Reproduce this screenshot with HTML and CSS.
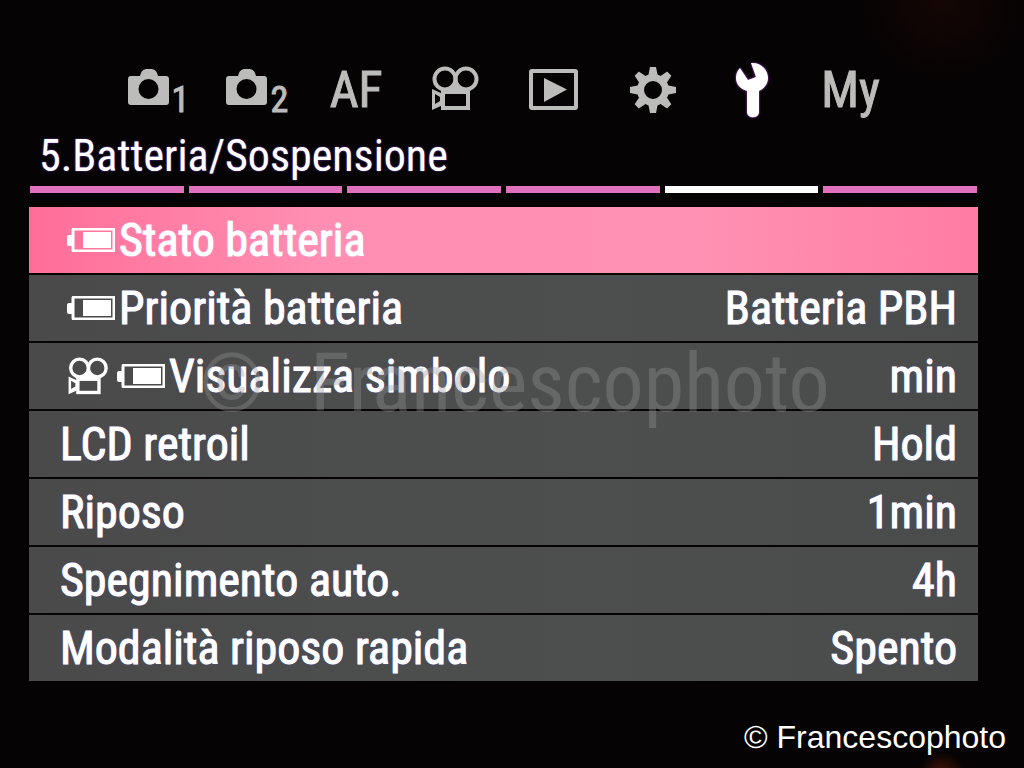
FILE: index.html
```html
<!DOCTYPE html>
<html lang="it">
<head>
<meta charset="utf-8">
<meta name="viewport" content="width=device-width, initial-scale=1">
<title>5.Batteria/Sospensione</title>
<link rel="stylesheet" href="styles.css">
</head>
<body>
<svg class="defs" aria-hidden="true">
  <symbol id="camera" viewBox="0 0 42 36">
    <path fill="currentColor" fill-rule="evenodd" d="M3 7H12Q13 1 18 0H24Q29 1 30 7H38Q41 7 41 10V33Q41 36 38 36H3Q0 36 0 33V10Q0 7 3 7ZM20.500 10A10 10 0 1 0 20.500 30A10 10 0 1 0 20.500 10Z"/>
  </symbol>
  <symbol id="movie" viewBox="0 0 48 45">
    <g fill="none" stroke="currentColor" stroke-width="4">
      <circle cx="14" cy="13" r="10.500"/>
      <circle cx="35" cy="13" r="10.500"/>
      <rect x="12" y="26" width="25" height="16"/>
    </g>
    <path fill="currentColor" d="M17 22L24.500 16L32 22L38 28H12Z"/>
    <path fill="currentColor" fill-rule="evenodd" d="M1 23L12 28V39L1 44ZM4 28V38L9 35V31Z"/>
  </symbol>
  <symbol id="battery" viewBox="0 0 48 24">
    <rect x="6" y="1" width="41" height="22" rx="1" fill="none" stroke="currentColor" stroke-width="3"/>
    <path fill="currentColor" d="M0 9Q0 7 2 7H6V18H2Q0 18 0 16ZM16 4H44V20H16Z"/>
  </symbol>
</svg>

<main class="screen">
  <nav class="tabs" aria-label="Menu">
    <button class="tab" type="button" aria-label="Foto 1"><svg class="icon-camera"><use href="#camera"/></svg><span class="tab-number">1</span></button>
    <button class="tab" type="button" aria-label="Foto 2"><svg class="icon-camera"><use href="#camera"/></svg><span class="tab-number">2</span></button>
    <button class="tab" type="button">AF</button>
    <button class="tab" type="button" aria-label="Video"><svg class="icon-movie"><use href="#movie"/></svg></button>
    <button class="tab" type="button" aria-label="Riproduzione">
      <svg class="icon-play" viewBox="0 0 50 42"><rect x="2" y="2" width="45" height="37" rx="1" fill="none" stroke="currentColor" stroke-width="4"/><path fill="currentColor" d="M15 9L38 20.500L15 33Z"/></svg>
    </button>
    <button class="tab" type="button" aria-label="Ingranaggio">
      <svg class="icon-gear" viewBox="-24 -24 48 48">
        <circle r="12.500" fill="none" stroke="currentColor" stroke-width="7"/>
        <g fill="currentColor">
          <path id="teeth" d="M-5 -13L-3 -23H3L5 -13ZM-5 13L-3 23H3L5 13ZM-13 -5L-23 -3V3L-13 5ZM13 -5L23 -3V3L13 5Z"/>
          <use href="#teeth" transform="rotate(45)"/>
        </g>
      </svg>
    </button>
    <button class="tab tab-active" type="button" aria-label="Impostazioni" aria-current="page">
      <svg class="icon-wrench" viewBox="0 0 32 56"><path fill="currentColor" d="M15 1C25 0 32 8 32 16C32 22 28 27 23 29V50C23 57 11 57 11 50V29C4 27 0 22 0 16C0 12 1 9 4 6L12 18L20 15Z"/></svg>
    </button>
    <button class="tab" type="button">My</button>
  </nav>

  <h1 class="title">5.Batteria/Sospensione</h1>
  <div class="pages">
    <span class="page"></span><span class="page"></span><span class="page"></span><span class="page"></span><span class="page page-active"></span><span class="page"></span>
  </div>

  <div class="list">
    <button class="row row-icon row-active" type="button"><svg class="icon-battery"><use href="#battery"/></svg><span class="label">Stato batteria</span></button>
    <button class="row row-icon" type="button"><svg class="icon-battery"><use href="#battery"/></svg><span class="label">Priorità batteria</span><span class="value">Batteria PBH</span></button>
    <button class="row row-icon" type="button"><svg class="icon-movie-small"><use href="#movie"/></svg><svg class="icon-battery"><use href="#battery"/></svg><span class="label">Visualizza simbolo</span><span class="value">min</span></button>
    <button class="row" type="button"><span class="label">LCD retroil</span><span class="value">Hold</span></button>
    <button class="row" type="button"><span class="label">Riposo</span><span class="value">1min</span></button>
    <button class="row" type="button"><span class="label">Spegnimento auto.</span><span class="value">4h</span></button>
    <button class="row" type="button"><span class="label">Modalità riposo rapida</span><span class="value">Spento</span></button>
    <div class="watermark"><span>©</span><span>Francescophoto</span></div>
  </div>
</main>
<footer class="credit">© Francescophoto</footer>
</body>
</html>
```
FILE: styles.css
```css
* { box-sizing: border-box; }

body {
  margin: 0;
  min-height: 100vh;
  background:
    radial-gradient(circle at 92% 101%, #4a1608 0, transparent 24px),
    radial-gradient(circle at 92% 0, #140604 0, transparent 90px),
    #050304;
  color: #fff;
  font-family: "Roboto Condensed", "Liberation Sans", sans-serif;
}

button {
  margin: 0;
  padding: 0;
  border: 0;
  background: none;
  color: inherit;
  font: inherit;
}

.defs { position: absolute; width: 0; height: 0; }

.screen { padding: 50px 46px 0 29px; }

.tabs {
  display: grid;
  grid-template-columns: repeat(8, 1fr);
  height: 80px;
  padding: 0 78px 0 80px;
}

.tab {
  display: flex;
  align-items: center;
  justify-content: center;
  color: #bcbcba;
  font-size: 50px;
  line-height: 80px;
  -webkit-text-stroke: 1px #bcbcba;
}

.tab-active { color: #fff; filter: drop-shadow(0 0 1px #b040e0); }

.tab-number {
  align-self: flex-end;
  margin-left: 2px;
  font-size: 36px;
  line-height: 60px;
}

.icon-camera { width: 42px; height: 36px; margin-bottom: 6px; }
.icon-movie { width: 48px; height: 45px; margin-bottom: 4px; }
.icon-play { width: 50px; height: 42px; }
.icon-gear { width: 48px; height: 48px; }
.icon-wrench { width: 32px; height: 56px; }
.icon-battery { width: 48px; height: 24px; margin-right: 4px; }
.icon-movie-small { width: 42px; height: 38px; margin-right: 8px; }
.icon-battery, .icon-movie-small { flex: none; overflow: visible; }

.title {
  margin: 0;
  padding: 0 0 4px 10px;
  font-size: 44px;
  font-weight: 400;
  line-height: 52px;
  text-shadow: 0 0 2px #8048e0;
}

.pages { display: grid; grid-template-columns: repeat(6, 1fr); gap: 5px; padding: 0 1px; }
.page { height: 7px; background: #e070bc; }
.page-active { background: #fff; }

.list {
  position: relative;
  display: flex;
  flex-direction: column;
  gap: 2px;
  margin-top: 14px;
}

.row {
  display: flex;
  align-items: center;
  height: 66px;
  padding: 0 21px 0 31px;
  background: linear-gradient(90deg, #4a4a4a, #4d4f4e 60%, #4a4c4b);
  font-size: 46px;
  font-weight: 400;
  text-align: left;
  text-shadow: 0 0 2px #6868e0;
  -webkit-text-stroke: 1px #fff;
}

.row-icon { padding-left: 38px; }

.row-active {
  background: linear-gradient(90deg, #ff6e98, #ff8eb2 30%, #ff92b4 70%, #ff7ca4);
  text-shadow: 0 0 2px #ffb0ff;
}

.label { flex: 1; }

.watermark {
  position: absolute;
  top: 120px;
  left: 18%;
  display: flex;
  gap: 46px;
  color: rgba(150, 150, 150, 0.35);
  font-size: 82px;
  font-weight: 400;
  line-height: 112px;
  white-space: nowrap;
  pointer-events: none;
}

.credit {
  padding: 38px 18px 0 0;
  font-family: "Liberation Sans", Arial, sans-serif;
  font-size: 32px;
  line-height: 36px;
  text-align: right;
}
```
